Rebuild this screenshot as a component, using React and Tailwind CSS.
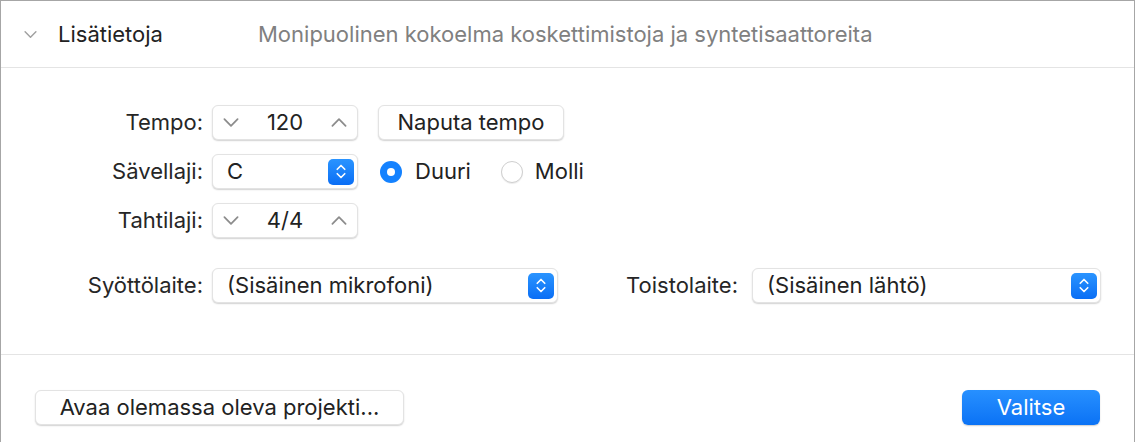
import React from "react";

const font = { fontFamily: "Inter, 'Liberation Sans', sans-serif" };

function ChevDown({ className = "" }) {
  return (
    <svg viewBox="0 0 16 10" className={className} fill="none" stroke="currentColor" strokeWidth="1.6" strokeLinecap="round" strokeLinejoin="round">
      <path d="M2 2 L8 8 L14 2" />
    </svg>
  );
}
function ChevUp({ className = "" }) {
  return (
    <svg viewBox="0 0 16 10" className={className} fill="none" stroke="currentColor" strokeWidth="1.6" strokeLinecap="round" strokeLinejoin="round">
      <path d="M2 8 L8 2 L14 8" />
    </svg>
  );
}

function BlueUpDown() {
  return (
    <div className="w-[26px] h-[26px] rounded-[5px] bg-gradient-to-b from-[#2a94ff] to-[#0a6ef5] flex items-center justify-center">
      <svg viewBox="0 0 16 22" className="w-[12px] h-[17px]" fill="none" stroke="white" strokeWidth="2.2" strokeLinecap="round" strokeLinejoin="round">
        <path d="M3 8 L8 3 L13 8" />
        <path d="M3 14 L8 19 L13 14" />
      </svg>
    </div>
  );
}

const boxCls =
  "h-[35px] bg-white rounded-[6px] border border-[#e3e3e3] shadow-[0_1px_1.5px_rgba(0,0,0,0.18)]";

function Stepper({ value }) {
  return (
    <div className={`${boxCls} w-[146px] flex items-center justify-between px-[9px] text-[#8c8c8c]`}>
      <ChevDown className="w-[18px] h-[11px]" />
      <span className="text-[#222] text-[22px]">{value}</span>
      <ChevUp className="w-[18px] h-[11px]" />
    </div>
  );
}

function Select({ value, width }) {
  return (
    <div className={`${boxCls} ${width} flex items-center justify-between pl-[14px] pr-[3px]`}>
      <span className="text-[#222] text-[22px]">{value}</span>
      <BlueUpDown />
    </div>
  );
}

function Label({ children }) {
  return <div className="w-[211px] text-right pr-[9px] text-[22px] text-[#262626]">{children}</div>;
}

export default function App() {
  return (
    <div style={font} className="w-[1136px] h-[442px] bg-white overflow-hidden">
      <div className="w-[1135px] h-[442px] border-t border-l border-r border-[#a6a6a6] flex flex-col">
        <div className="h-[67px] border-b border-[#e4e4e4] flex items-center shrink-0">
          <div className="w-[57px] flex justify-end pr-[20px] text-[#a0a0a0]">
            <ChevDown className="w-[15px] h-[9px]" />
          </div>
          <div className="w-[200px] text-[22px] text-[#222]">Lisätietoja</div>
          <div className="text-[22px] text-[#808080]">Monipuolinen kokoelma koskettimistoja ja syntetisaattoreita</div>
        </div>

        <div className="h-[287px] border-b border-[#e4e4e4] shrink-0 pt-[37px]">
          <div className="flex items-center">
            <Label>Tempo:</Label>
            <Stepper value="120" />
            <div className={`${boxCls} ml-[20px] w-[186px] flex items-center justify-center text-[22px] text-[#222]`}>
              Naputa tempo
            </div>
          </div>
          <div className="flex items-center mt-[14px]">
            <Label>Sävellaji:</Label>
            <Select value="C" width="w-[146px]" />
            <div className="ml-[22px] flex items-center">
              <div className="w-[22px] h-[22px] rounded-full bg-[#1482ff] flex items-center justify-center">
                <div className="w-[8px] h-[8px] rounded-full bg-white" />
              </div>
              <span className="ml-[13px] text-[22px] text-[#222]">Duuri</span>
              <div className="ml-[30px] w-[22px] h-[22px] rounded-full bg-white border border-[#cfcfcf] shadow-[0_1px_1px_rgba(0,0,0,0.08)]" />
              <span className="ml-[12px] text-[22px] text-[#222]">Molli</span>
            </div>
          </div>
          <div className="flex items-center mt-[14px]">
            <Label>Tahtilaji:</Label>
            <Stepper value="4/4" />
          </div>
          <div className="flex items-center mt-[30px]">
            <Label>Syöttölaite:</Label>
            <Select value="(Sisäinen mikrofoni)" width="w-[346px]" />
            <div className="w-[194px] text-right pr-[14px] text-[22px] text-[#262626]">Toistolaite:</div>
            <Select value="(Sisäinen lähtö)" width="w-[349px]" />
          </div>
        </div>

        <div className="flex-1 flex items-start justify-between pt-[35px] pl-[34px] pr-[34px]">
          <div className={`${boxCls} w-[369px] flex items-center justify-center text-[22px] text-[#222]`}>
            Avaa olemassa oleva projekti...
          </div>
          <div className="h-[35px] w-[138px] rounded-[6px] bg-gradient-to-b from-[#2790ff] to-[#0a72f5] shadow-[0_1px_1.5px_rgba(0,0,0,0.2)] flex items-center justify-center text-white text-[22px]">
            Valitse
          </div>
        </div>
      </div>
    </div>
  );
}
